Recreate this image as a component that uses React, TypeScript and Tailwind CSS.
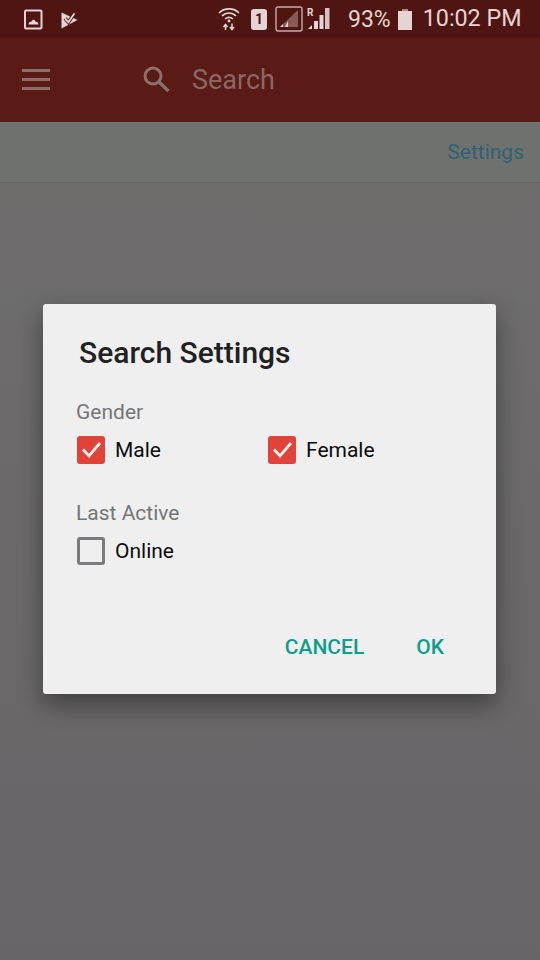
import React from "react";

const Check = ({ checked }: { checked: boolean }) =>
  checked ? (
    <div className="w-[28px] h-[28px] rounded-[3px] bg-[#e0433a] flex items-center justify-center">
      <svg width="28" height="28" viewBox="0 0 28 28" fill="none">
        <path d="M6 13.5 L12 20 L23 7" stroke="#f6eeee" strokeWidth="2.8" />
      </svg>
    </div>
  ) : (
    <div className="w-[28px] h-[28px] rounded-[3px] border-[3px] border-[#7b7a7c]" />
  );

const Option = ({ label, checked, width }: { label: string; checked: boolean; width: string }) => (
  <div className={`flex items-center gap-[10px] ${width}`}>
    <Check checked={checked} />
    <span className="text-[21px] leading-[28px] text-[#0c0c0c]">{label}</span>
  </div>
);

export default function App() {
  return (
    <div
      className="relative w-[540px] h-[960px] overflow-hidden flex flex-col bg-gradient-to-b from-[#706f6e] to-[#676567]"
      style={{ fontFamily: "Roboto, 'Liberation Sans', sans-serif" }}
    >
      {/* status bar */}
      <div className="h-[38px] bg-[#4e1512] flex items-center text-[#e6d4d2] shrink-0">
        <svg className="ml-[24px]" width="19" height="21" viewBox="0 0 19 21" fill="none">
          <rect x="1" y="1.5" width="16.5" height="18" rx="1" stroke="#e6d4d2" strokeWidth="2" />
          <path d="M4.5 15.5 C5 12.5 6.5 13 7.5 12.5 C8.5 10 10.5 10 11.5 12.5 C13 13 14 13 14.5 15.5 Z" fill="#e6d4d2" />
        </svg>
        <svg className="ml-[18px]" width="18" height="20" viewBox="0 0 18 20" fill="none">
          <path d="M0.5 3.5 V19.5 L16.5 11 Z" fill="#e6d4d2" />
          <path d="M4 9.3 L7.3 13.2 L13.5 4.3" stroke="#4e1512" strokeWidth="3.6" />
          <path d="M4 9.3 L7.3 13.2 L13.5 4.3" stroke="#e6d4d2" strokeWidth="1.8" />
        </svg>
        <svg className="ml-[139px]" width="22" height="24" viewBox="0 0 22 24" fill="none">
          <path d="M1 6 C6 0.5 16 0.5 21 6" stroke="#e6d4d2" strokeWidth="1.6" />
          <path d="M4 9 C8 5 14 5 18 9" stroke="#e6d4d2" strokeWidth="1.6" />
          <path d="M7 12 C9.5 10 12.5 10 15 12" stroke="#e6d4d2" strokeWidth="1.6" />
          <circle cx="11" cy="14" r="1.4" fill="#e6d4d2" />
          <path d="M7.5 23 V18 M5.5 20 L7.5 17.5 L9.5 20 M14 16.5 V22 M12 20 L14 22.5 L16 20" stroke="#e6d4d2" strokeWidth="1.5" />
        </svg>
        <div className="ml-[11px] w-[16px] h-[21px] bg-[#e6d4d2] rounded-[3px] flex items-center justify-center text-[14px] leading-none font-bold text-[#4e1512]">
          1
        </div>
        <svg className="ml-[8px]" width="28" height="26" viewBox="0 0 28 26" fill="none">
          <rect x="1" y="1" width="26" height="24" rx="2" stroke="#c9aba8" strokeWidth="1.4" />
          <path d="M5 21 L23 4 V21 Z" fill="#8a5a56" />
          <path d="M5 21 L8 18 V21 Z M10 21 L13 15 V21 Z" fill="#e6d4d2" />
        </svg>
        <svg className="ml-[4px]" width="23" height="24" viewBox="0 0 23 24" fill="none">
          <path d="M1 22 L5 18 V22 Z" fill="#e6d4d2" />
          <rect x="7" y="14" width="4" height="8" fill="#e6d4d2" />
          <rect x="12.5" y="8" width="4" height="14" fill="#e6d4d2" />
          <rect x="18" y="1" width="4.5" height="21" fill="#d8c2c0" />
          <text x="0" y="9" fontSize="10" fontWeight="700" fill="#e6d4d2">R</text>
        </svg>
        <span className="ml-[18px] text-[23px] leading-none whitespace-nowrap">93%</span>
        <svg className="ml-[7px]" width="14" height="21" viewBox="0 0 14 21">
          <rect x="4" y="0" width="6" height="3" fill="#a98a87" />
          <rect x="0" y="2" width="14" height="19" fill="#e6d4d2" />
        </svg>
        <span className="ml-[11px] text-[23.3px] leading-none whitespace-nowrap">10:02 PM</span>
      </div>

      {/* toolbar */}
      <div className="h-[84px] bg-[#5a1a15] flex items-center shrink-0">
        <div className="ml-[22px] mb-[2px] w-[28px] flex flex-col gap-[6px]">
          <div className="h-[3px] bg-[#8f6c68]" />
          <div className="h-[3px] bg-[#8f6c68]" />
          <div className="h-[3px] bg-[#8f6c68]" />
        </div>
        <svg className="ml-[92px] mb-[2px]" width="28" height="28" viewBox="0 0 28 28" fill="none">
          <circle cx="11" cy="11" r="8" stroke="#8f6f6b" strokeWidth="3" />
          <path d="M17 17 L26.5 26" stroke="#8f6f6b" strokeWidth="3.4" />
        </svg>
        <span className="ml-[22px] text-[27px] leading-none text-[#8a6763]">Search</span>
      </div>

      {/* tab row */}
      <div className="h-[61px] shrink-0 border-b border-[#666766] bg-[#6f716f] flex items-center justify-end pr-[16px]">
        <span className="text-[21px] leading-none text-[#2f6272]">Settings</span>
      </div>

      {/* dialog */}
      <div className="absolute left-[43px] top-[304px] w-[453px] h-[390px] rounded-[3px] bg-[#efeff0] shadow-[0_10px_24px_rgba(0,0,0,0.4)] flex flex-col pl-[33px] pr-[32px]">
        <h1 className="ml-[3px] mt-[31px] text-[30px] leading-[36px] font-medium text-[#212121]">Search Settings</h1>
        <div className="mt-[29px] text-[21px] leading-[24px] text-[#757575]">Gender</div>
        <div className="mt-[12px] ml-[1px] flex">
          <Option label="Male" checked width="w-[191px]" />
          <Option label="Female" checked width="" />
        </div>
        <div className="mt-[37px] text-[21px] leading-[24px] text-[#757575]">Last Active</div>
        <div className="mt-[12px] ml-[1px] flex">
          <Option label="Online" checked={false} width="" />
        </div>
        <div className="mt-auto mb-[33px] flex justify-end gap-[52px] pr-[20px] text-[21px] leading-[28px] font-medium text-[#0f9d8a]">
          <span>CANCEL</span>
          <span>OK</span>
        </div>
      </div>
    </div>
  );
}
